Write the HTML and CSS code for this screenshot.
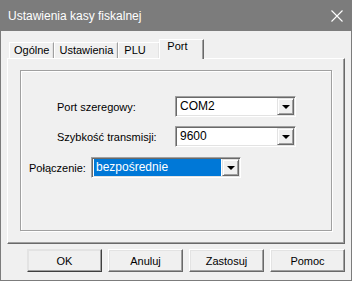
FILE: index.html
```html
<!DOCTYPE html>
<html lang="pl">
<head>
  <meta charset="UTF-8">
  <title>Ustawienia kasy fiskalnej</title>
  <link rel="stylesheet" href="styles.css">
</head>
<body>

  <div class="window">
    <!-- pasek tytułu -->
    <div class="titlebar">
      <span class="title">Ustawienia kasy fiskalnej</span>
      <svg class="close" width="12" height="12" viewBox="0 0 12 12">
        <path d="M0.5 0.5 L11.5 11.5 M11.5 0.5 L0.5 11.5" stroke="#fff" stroke-width="1.1" fill="none"/>
      </svg>
    </div>

    <!-- zakładki -->
    <div class="tabs">
      <div class="tab">Ogólne</div>
      <div class="tab">Ustawienia</div>
      <div class="tab">PLU</div>
      <div class="tab active">Port</div>
    </div>

    <div class="panel">
      <div class="groupbox">
        <div class="row row-port">
          <label class="label label-wide">Port szeregowy:</label>
          <div class="combo combo-wide">
            <span class="value">COM2</span>
            <span class="drop"><span class="arrow"></span></span>
          </div>
        </div>
        <div class="row row-speed">
          <label class="label label-wide">Szybkość transmisji:</label>
          <div class="combo combo-wide">
            <span class="value">9600</span>
            <span class="drop"><span class="arrow"></span></span>
          </div>
        </div>
        <div class="row row-conn">
          <label class="label label-narrow">Połączenie:</label>
          <div class="combo combo-conn">
            <span class="value selected">bezpośrednie</span>
            <span class="drop"><span class="arrow"></span></span>
          </div>
        </div>
      </div>
    </div>

    <!-- przyciski -->
    <div class="buttons">
      <button class="btn default">OK</button>
      <button class="btn">Anuluj</button>
      <button class="btn">Zastosuj</button>
      <button class="btn">Pomoc</button>
    </div>
  </div>

</body>
</html>
```

FILE: styles.css
```css
/* ===== całość ===== */
body {
  margin: 0;
  padding: 0;
  font-family: "Liberation Sans", Arial, sans-serif;
  font-size: 11px;
  color: #000;
  background: #f0f0f0;
}

.window {
  width: 352px;
  height: 281px;
  box-sizing: border-box;
  border: 1px solid #7c7c7c;
  border-top: none;
  background: #f0f0f0;
  display: flex;
  flex-direction: column;
}

/* ===== pasek tytułu ===== */
.titlebar {
  height: 31px;
  flex-shrink: 0;
  background: #7c7c7c;
  color: #fff;
  display: flex;
  align-items: center;
  justify-content: space-between;
  padding: 0 9px 0 8px;
  margin: 0 -1px;
  font-size: 12px;
}
.title {
  padding-top: 1px;
}

/* ===== zakładki ===== */
.tabs {
  display: flex;
  align-items: flex-end;
  height: 19px;
  margin: 8px 6px 0;
  padding-left: 2px;
}
.tab {
  height: 16px;
  min-width: 30px;
  box-sizing: border-box;
  padding: 0 4px;
  line-height: 14px;
  border: 1px solid #fff;
  border-right-color: #a0a0a0;
  border-bottom: none;
  box-shadow: inset -1px 0 #e3e3e3;
  white-space: nowrap;
}
.tab:nth-child(3) {
  min-width: 42px;
  padding-left: 5px;
}
.tab.active {
  position: relative;
  z-index: 1;
  height: 20px;
  margin: 0 -2px -1px -1px;
  padding: 0 7px;
  min-width: 45px;
  line-height: 13px;
  background: #f0f0f0;
  border-right-color: #696969;
  box-shadow: inset -1px 0 #a0a0a0;
}

/* ===== panel ===== */
.panel {
  height: 186px;
  box-sizing: border-box;
  margin: 0 6px;
  border: 1px solid;
  border-color: #fff #696969 #696969 #fff;
  box-shadow: inset -1px -1px #a0a0a0;
  padding: 11px 12px 0 12px;
}

/* ramka grupy */
.groupbox {
  height: 161px;
  box-sizing: border-box;
  border: 1px solid #a0a0a0;
  box-shadow: inset 1px 1px #fff, 1px 1px #fff;
  padding-top: 25px;
}

.row {
  display: flex;
  align-items: center;
  height: 21px;
}
.row-speed {
  margin-top: 9px;
}
.row-conn {
  margin-top: 10px;
}
.label {
  white-space: nowrap;
}
.label-wide {
  width: 118px;
  margin-left: 36px;
}
.label-narrow {
  width: 62px;
  margin-left: 8px;
}

/* ===== lista rozwijana ===== */
.combo {
  height: 21px;
  box-sizing: border-box;
  display: flex;
  align-items: stretch;
  border: 1px solid;
  border-color: #a0a0a0 #fff #fff #a0a0a0;
  box-shadow: inset 1px 1px #696969, inset -1px -1px #e3e3e3;
  background: #fff;
  padding: 1px 1px 1px 2px;
  font-size: 12px;
}
.combo-wide {
  width: 121px;
}
.combo-conn {
  width: 150px;
}
.value {
  flex: 1;
  padding-left: 2px;
  line-height: 17px;
  margin-right: 1px;
}
.value.selected {
  background: #0078d7;
  color: #fff;
}
.drop {
  width: 17px;
  box-sizing: border-box;
  background: #f0f0f0;
  border: 1px solid;
  border-color: #e3e3e3 #696969 #696969 #e3e3e3;
  box-shadow: inset 1px 1px #fff, inset -1px -1px #a0a0a0;
  display: flex;
  align-items: center;
  justify-content: center;
}
.arrow {
  width: 0;
  height: 0;
  border-left: 4px solid transparent;
  border-right: 4px solid transparent;
  border-top: 4px solid #000;
  margin-top: 1px;
}

/* ===== przyciski ===== */
.buttons {
  display: flex;
  gap: 6px;
  padding-left: 26px;
  margin-top: 5px;
}
.btn {
  width: 75px;
  height: 23px;
  box-sizing: border-box;
  font-family: "Liberation Sans", Arial, sans-serif;
  font-size: 11px;
  color: #000;
  background: #f0f0f0;
  border: 1px solid;
  border-color: #fff #696969 #696969 #fff;
  box-shadow: inset -1px -1px #a0a0a0, inset 1px 1px #e3e3e3;
  padding: 0;
}
.btn.default {
  border-color: #e3e3e3 #404040 #404040 #e3e3e3;
}
```
